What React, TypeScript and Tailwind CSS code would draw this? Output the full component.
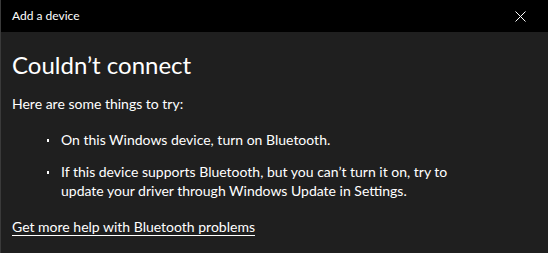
import React from 'react';

export default function App() {
    return (
        <div
            className="w-[548px] h-[253px] bg-[#1f1f1f] text-white flex flex-col overflow-hidden border-l border-[#3a3a3a]"
            style={{ fontFamily: '"Segoe UI", Lato, "Liberation Sans", sans-serif' }}
        >
            {/* Title bar */}
            <div className="h-[32px] bg-black flex items-center justify-between pl-[11px] pr-[22px] shrink-0">
                <span className="text-[12px]">Add a device</span>
                <svg width="11" height="11" viewBox="0 0 11 11" className="text-white">
                    <path d="M0.5 0.5 L10.5 10.5 M10.5 0.5 L0.5 10.5" stroke="currentColor" strokeWidth="1" />
                </svg>
            </div>

            {/* Content */}
            <div className="flex flex-col pl-[11px] pr-4">
                <h1 className="text-[24px] leading-[32px] mt-[17px] font-normal">Couldn’t connect</h1>
                <p className="text-[14px] leading-[20px] mt-[13px]">Here are some things to try:</p>
                <ul className="mt-[16px] flex flex-col gap-[13px] text-[14px] leading-[19px]">
                    <li className="flex">
                        <span className="w-[49px] pl-[35px] pt-[9px] shrink-0">
                            <span className="block w-[2px] h-[3px] bg-white" />
                        </span>
                        <span>On this Windows device, turn on Bluetooth.</span>
                    </li>
                    <li className="flex">
                        <span className="w-[49px] pl-[35px] pt-[9px] shrink-0">
                            <span className="block w-[2px] h-[3px] bg-white" />
                        </span>
                        <span>
                            If this device supports Bluetooth, but you can’t turn it on, try to
                            <br />
                            update your driver through Windows Update in Settings.
                        </span>
                    </li>
                </ul>
                <a className="text-[14px] leading-[20px] mt-[17px] underline underline-offset-[3px] self-start">
                    Get more help with Bluetooth problems
                </a>
            </div>
        </div>
    );
}
